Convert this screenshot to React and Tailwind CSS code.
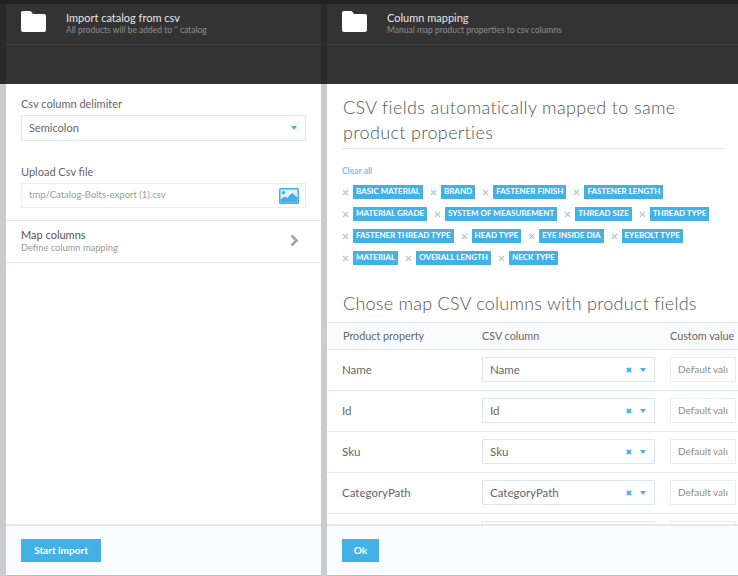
const font = { fontFamily: '"Lato", "Liberation Sans", sans-serif' }

const tags = [
  'Basic material', 'Brand', 'Fastener finish', 'Fastener length',
  'Material grade', 'System of measurement', 'Thread size', 'Thread type',
  'Fastener thread type', 'Head type', 'Eye inside dia', 'Eyebolt type',
  'Material', 'Overall length', 'Neck type',
]

const rows = ['Name', 'Id', 'Sku', 'CategoryPath', '']

function FolderIcon() {
  return (
    <svg width="25" height="21" viewBox="0 0 25 21" className="shrink-0">
      <path d="M2 0h6.5c1 0 1.6.4 2.2 1.2L12 3h11c1.2 0 2 .8 2 2v14c0 1.2-.8 2-2 2H2c-1.2 0-2-.8-2-2V2C0 .8.8 0 2 0z" fill="#fff" />
    </svg>
  )
}

function Caret() {
  return (
    <svg width="6" height="4" viewBox="0 0 6 4" className="shrink-0">
      <path d="M0 0h6L3 4z" fill="#43b0e6" />
    </svg>
  )
}

function BladeHeader({ title, subtitle }) {
  return (
    <div className="h-[84px] shrink-0 bg-[#333333] border-t-4 border-[#222222]">
      <div className="h-[41px] flex items-start pl-[15px] pt-[7px] border-b border-[#3f3f3f]">
        <FolderIcon />
        <div className="ml-[20px] -mt-[1px]">
          <div className="text-[11px] leading-[15px] text-[#e6e6e6]">{title}</div>
          <div className="text-[8.5px] leading-[10px] text-[#8f8f8f]">{subtitle}</div>
        </div>
      </div>
    </div>
  )
}

function BladeFooter({ label, width }) {
  return (
    <div className="h-[52px] shrink-0 bg-[#fbfcff] border-t-2 border-b border-t-[#dfebef] border-b-[#b5bfc4] pl-[15px] pt-[13px]">
      <button className={`${width} h-[23px] bg-[#43b0e6] text-white text-[10px] font-bold flex items-center justify-center`}>
        {label}
      </button>
    </div>
  )
}

function Gutter({ className = '' }) {
  return (
    <div className={`shrink-0 ${className}`}>
      <div className="h-[84px] bg-[#2a2a2a] border-t-4 border-[#222222]" />
    </div>
  )
}

function Tag({ label }) {
  return (
    <div className="flex items-center mr-[7px] mb-[8px]">
      <svg width="7" height="7" viewBox="0 0 7 7" className="mr-[4px]">
        <path d="M1 1l5 5M6 1L1 6" stroke="#b3c5d6" strokeWidth="1.1" />
      </svg>
      <span className="h-[14px] px-[3px] bg-[#43b0e6] text-white text-[8px] leading-[13px] font-bold uppercase whitespace-nowrap">
        {label}
      </span>
    </div>
  )
}

function MapRow({ label }) {
  return (
    <div className="h-[41px] shrink-0 flex border-b border-[#dfebf2] pt-[7px] text-[11.5px] text-[#666666]">
      <div className="w-[155px] pl-[15px] h-[25px] leading-[25px] shrink-0">{label}</div>
      <div className="w-[173px] h-[25px] shrink-0 border border-[#dbe8f0] flex items-center pl-[7px] pr-[8px]">
        <span className="flex-1">{label}</span>
        {label && (
          <svg width="6" height="6" viewBox="0 0 6 6" className="mr-[8px]">
            <path d="M1 1l4 4M5 1L1 5" stroke="#43b0e6" strokeWidth="2" />
          </svg>
        )}
        {label && <Caret />}
      </div>
      <div className="w-[66px] h-[25px] ml-[15px] shrink-0 border border-[#e3edf3] pl-[7px] leading-[23px] text-[10px] text-[#8c8c8c] overflow-hidden whitespace-nowrap">
        {label && 'Default valı'}
      </div>
    </div>
  )
}

export default function App() {
  return (
    <div className="w-[738px] h-[576px] flex overflow-hidden bg-[#cccccc]" style={font}>
      <Gutter className="w-[6px]" />

      <div className="w-[315px] shrink-0 flex flex-col bg-white">
        <BladeHeader title="Import catalog from csv" subtitle="All products will be added to '' catalog" />
        <div className="flex-1">
          <div className="px-[15px] pt-[13px] text-[11px] text-[#666666]">
            <div className="h-[14px] leading-[14px]">Csv column delimiter</div>
            <div className="mt-[4px] h-[26px] border border-[#dbe8f0] flex items-center pl-[7px] pr-[8px]">
              <span className="flex-1">Semicolon</span>
              <Caret />
            </div>
            <div className="mt-[24px] h-[14px] leading-[14px]">Upload Csv file</div>
            <div className="mt-[4px] h-[25px] border border-[#e8eff3] flex items-center pl-[7px] pr-[6px]">
              <span className="flex-1 text-[9.5px] text-[#999999]">tmp/Catalog-Bolts-export (1).csv</span>
              <svg width="20" height="16" viewBox="0 0 20 16">
                <rect width="20" height="16" rx="1.5" fill="#43b0e6" />
                <rect x="1.5" y="1.5" width="17" height="13" fill="#dff1fb" />
                <circle cx="4.5" cy="4.5" r="1.8" fill="#43b0e6" />
                <path d="M1.5 14.5v-3l4-3 2.5 1.5 5-5 5.5 4.5v5z" fill="#43b0e6" />
              </svg>
            </div>
          </div>
          <div className="mt-[12px] h-[43px] border-y border-[#dbe8f0] flex items-center pl-[15px] pr-[22px] pb-[2px]">
            <div className="flex-1">
              <div className="text-[11px] leading-[13px] text-[#555555]">Map columns</div>
              <div className="text-[9.3px] leading-[13px] text-[#999999]">Define column mapping</div>
            </div>
            <svg width="9" height="13" viewBox="0 0 9 13">
              <path d="M1.5 1.5l5 5-5 5" fill="none" stroke="#a3a3a3" strokeWidth="2.6" />
            </svg>
          </div>
        </div>
        <BladeFooter label="Start import" width="w-[80px]" />
      </div>

      <Gutter className="w-[6px]" />

      <div className="w-[411px] shrink-0 flex flex-col bg-white overflow-hidden">
        <BladeHeader title="Column mapping" subtitle="Manual map product properties to csv columns" />
        <div className="flex-1 min-h-0 overflow-hidden">
          <div className="mx-[15px] w-[383px] pl-[1px] pt-[11px] pb-[3px] border-b border-[#dbe8f0] text-[18px] font-light leading-[25px] text-[#555555] tracking-[0.35px]">
            CSV fields automatically mapped to same product properties
          </div>
          <div className="pl-[15px] w-[398px]">
            <div className="mt-[17px] h-[11px] text-[8.5px] leading-[11px] font-bold text-[#7cc4ea]">Clear all</div>
            <div className="mt-[8px] flex flex-wrap">
              {tags.map(t => <Tag key={t} label={t} />)}
            </div>
          </div>
          <div className="mt-[18px] pl-[16px] h-[25px] text-[18px] font-light leading-[25px] text-[#555555] tracking-[0.25px] whitespace-nowrap">
            Chose map CSV columns with product fields
          </div>
          <div className="mt-[6px] h-[28px] flex items-center bg-[#fafbfd] border-y border-[#dfebf2] text-[10.8px] text-[#666666]">
            <div className="w-[155px] pl-[16px] shrink-0">Product property</div>
            <div className="w-[188px] shrink-0">CSV column</div>
            <div className="whitespace-nowrap">Custom value</div>
          </div>
          {rows.map((r, i) => <MapRow key={i} label={r} />)}
        </div>
        <BladeFooter label="Ok" width="w-[37px]" />
      </div>
    </div>
  )
}
